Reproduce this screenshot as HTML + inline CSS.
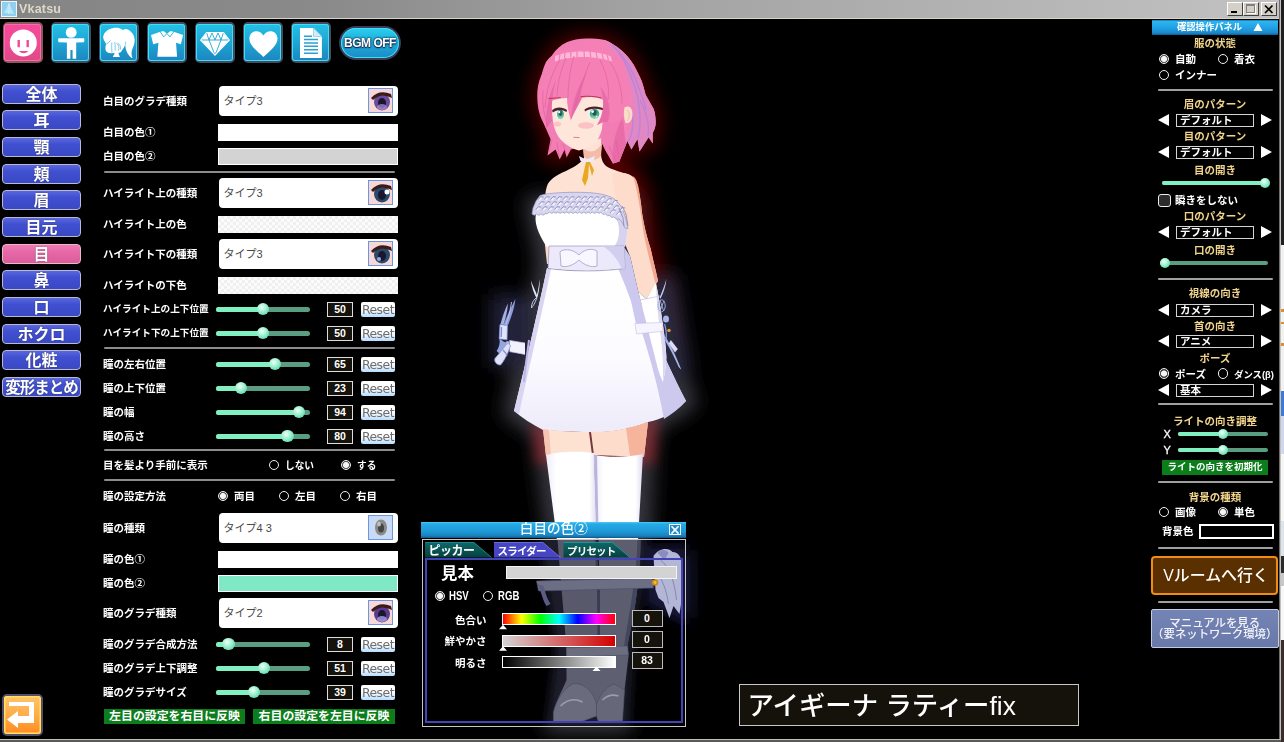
<!DOCTYPE html>
<html lang="ja">
<head>
<meta charset="utf-8">
<title>Vkatsu</title>
<style>
*{box-sizing:border-box;margin:0;padding:0}
html,body{width:1284px;height:742px;overflow:hidden;background:#000}
body{position:relative;font-family:"Liberation Sans","Noto Sans CJK JP",sans-serif;color:#fff;font-size:11px}
.abs{position:absolute}
#titlebar{position:absolute;left:0;top:0;width:1281px;height:19px;background:linear-gradient(90deg,#858585 0%,#8a8a8a 25%,#a2a2a2 50%,#c2c2c2 100%);border-bottom:1px solid #d8d4c8}
#titlebar .ttl{position:absolute;left:19px;top:0;line-height:19px;font-size:12.5px;color:#ddd8c8;font-weight:bold;letter-spacing:.2px}
#client{position:absolute;left:0;top:19px;width:1280px;height:720px;background:#000;overflow:hidden}
/* top toolbar */
.tb{position:absolute;top:22.2px;width:40.4px;height:40.8px;border-radius:5px;background:#48485f;padding:1.5px}
.tb i{display:block;width:37.4px;height:37.8px;border-radius:3px;background:linear-gradient(180deg,#25c0e6 0%,#1fa8d6 45%,#1b86c0 100%);box-shadow:inset 0 0 0 1px #39e0f6}
.tb.sel{background:#8a5a5a}
.tb.sel i{background:linear-gradient(180deg,#f24a9a 0%,#ee4c96 50%,#e04884 100%);box-shadow:inset 0 0 0 1px #ff66b4}
.tb svg{position:absolute;left:.4px;top:.8px}
/* left nav */
.nv{position:absolute;left:2px;width:79px;height:20px;border-radius:4px;border:1px solid #b8b8d8;background:linear-gradient(180deg,#5a68de 0%,#4050d0 35%,#3a48c4 100%);color:#fff;font-weight:bold;font-size:16px;line-height:19.5px;text-align:center;text-shadow:0 0 1px #223}
.nv.sel{background:linear-gradient(180deg,#f07ab4 0%,#e668a6 40%,#dc5c9a 100%);border-color:#e8b8d0}
/* form */
.lb{position:absolute;left:103px;height:14px;line-height:14px;font-size:10.5px;font-weight:bold;color:#fff;white-space:nowrap}
.dd{position:absolute;left:219px;width:179px;height:29.6px;border-radius:4px;background:#fff;color:#484848;font-size:11px;line-height:30.5px;padding-left:4.5px}
.dd .th{position:absolute;right:5px;top:2px;width:25px;height:25px;border:1px solid #6a96e4;background:#f4dada;overflow:hidden}
.cb{position:absolute;left:218px;width:180px;height:17px;background:#fff}
.sep{position:absolute;left:104px;width:291px;height:2px;background:#8c8c8c;border-radius:1px}
.sl{position:absolute;left:216px;width:94px;height:5px;border-radius:3px;background:#5a9e82}
.sl b{position:absolute;left:0;top:0;height:5px;border-radius:3px;background:#80f0c0}
.sl u{position:absolute;top:-3.7px;margin-left:.3px;width:12.4px;height:12.4px;border-radius:50%;background:radial-gradient(circle at 40% 35%,#f0fff8 0%,#b4f6dc 30%,#6ee0b4 70%,#4cc09a 100%)}
.nb{position:absolute;left:327px;width:26px;height:15px;border:1px solid #ddd;background:#15130b;color:#fff;font-weight:bold;font-size:10.5px;line-height:13px;text-align:center}
.rs{position:absolute;left:361px;width:34px;height:15px;border-radius:2px;background:linear-gradient(180deg,#fff 0%,#fff 45%,#b8dcff 100%);color:#6c6c6c;font-size:12.4px;line-height:16.5px;text-align:center;font-family:"DejaVu Sans","Liberation Sans",sans-serif;letter-spacing:-.5px;overflow:hidden}
.rd{position:absolute;width:10.6px;height:10.6px;border-radius:50%;border:1.8px solid #f0f0f0;background:#000;margin:.2px}
.rd.on{background:radial-gradient(circle,#fafafa 0,#f0f0f0 2.7px,#555 3.3px,#333 4px)}
.rt{position:absolute;height:14px;line-height:14px;font-size:10.5px;font-weight:bold;color:#fff;white-space:nowrap}
.gb{position:absolute;height:15px;background:#0b7d1b;color:#fff;font-weight:bold;font-size:11.9px;line-height:15px;text-align:center;white-space:nowrap}
/* right panel */
.rh{position:absolute;left:1152px;top:19.5px;width:126px;height:15px;background:linear-gradient(180deg,#1470a8 0,#2cb4f0 1.5px,#22a2e4 50%,#1a88cc 13px,#0e5a90 15px);color:#fff;font-weight:bold;font-size:9.3px;line-height:15px}
.tl{position:absolute;left:1152px;width:126px;height:14px;line-height:14px;text-align:center;color:#f0d48c;font-weight:bold;font-size:10.5px;white-space:nowrap}
.rsep{position:absolute;left:1158px;width:115px;height:2px;background:#a0a0a0;border-radius:1px}
.selr{position:absolute;left:1158px;width:114px;height:13px}
.selr .bx{position:absolute;left:18px;top:0;width:78px;height:13px;border:1.3px solid #d4d4d4;background:#000;color:#fff;font-weight:bold;font-size:10.5px;line-height:10px;padding-left:3px;white-space:nowrap;overflow:hidden}
.selr .la{position:absolute;left:0;top:0;width:0;height:0;border-top:6.5px solid transparent;border-bottom:6.5px solid transparent;border-right:11px solid #fff}
.selr .ra{position:absolute;right:0;top:0;width:0;height:0;border-top:6.5px solid transparent;border-bottom:6.5px solid transparent;border-left:11px solid #fff}
.sl2{position:absolute;height:4px;border-radius:2px;background:#5a9e82}
.sl2 b{position:absolute;left:0;top:0;height:4px;border-radius:2px;background:#80f0c0}
.sl2 u{position:absolute;top:-3px;width:10px;height:10px;border-radius:50%;background:radial-gradient(circle at 40% 35%,#f0fff8 0%,#b4f6dc 30%,#6ee0b4 70%,#4cc09a 100%)}
</style>
</head>
<body>
<div id="titlebar"><svg class="abs" style="left:1px;top:1px" width="16" height="16" viewBox="0 0 16 16"><rect x="0" y="0" width="16" height="16" fill="#8fd0ee"/><rect x=".5" y=".5" width="15" height="15" fill="none" stroke="#e8f6ff"/><path d="M8 2 L3 12 L13 13 Z" fill="#b8e4f8"/><path d="M8 2 L8 13" stroke="#d8f0fc" stroke-width=".8"/></svg><span class="ttl">Vkatsu</span><div class="abs" style="left:1227px;top:2px;width:16px;height:14px;background:#d4d0c8;border:1px solid #fff;border-right-color:#404040;border-bottom-color:#404040"><div class="abs" style="left:3px;top:8px;width:6px;height:2px;background:#000"></div></div><div class="abs" style="left:1243px;top:2px;width:16px;height:14px;background:#d4d0c8;border:1px solid #fff;border-right-color:#404040;border-bottom-color:#404040"><div class="abs" style="left:2px;top:1px;width:9px;height:9px;border:1px solid #808080;border-top-width:2px;box-shadow:1px 1px 0 #fff"></div></div><div class="abs" style="left:1261px;top:2px;width:16px;height:14px;background:#d4d0c8;border:1px solid #fff;border-right-color:#404040;border-bottom-color:#404040"><svg class="abs" style="left:2px;top:1px" width="10" height="10" viewBox="0 0 10 10"><path d="M1 1.5 L8.5 9 M8.5 1.5 L1 9" stroke="#000" stroke-width="1.7"/></svg></div></div>
<svg class="abs" style="left:0;top:19px" width="1280" height="720" viewBox="0 19 1280 720">
<defs>
<filter id="b14" x="-50%" y="-50%" width="200%" height="200%"><feGaussianBlur stdDeviation="9"/></filter>
<filter id="b8" x="-50%" y="-50%" width="200%" height="200%"><feGaussianBlur stdDeviation="6"/></filter>
<linearGradient id="gskirt" x1="0" y1="0" x2="0" y2="1"><stop offset="0" stop-color="#ffffff"/><stop offset=".55" stop-color="#fcfbff"/><stop offset="1" stop-color="#eeebfa"/></linearGradient>
<linearGradient id="gstock" x1="0" y1="0" x2="1" y2="0"><stop offset="0" stop-color="#eeeaf8"/><stop offset=".2" stop-color="#ffffff"/><stop offset=".85" stop-color="#ffffff"/><stop offset="1" stop-color="#dcd8f0"/></linearGradient>
<linearGradient id="ghair" x1="0" y1="0" x2="1" y2="0"><stop offset="0" stop-color="#f27cb4"/><stop offset=".7" stop-color="#f482b8"/><stop offset="1" stop-color="#e882c0"/></linearGradient>
<path id="hairo" d="M587,38.5 C579,38.5 572,40 566.7,42.2 C561,45 556,49 552.6,54.4 C548,60 545,66 542.5,72.6 C540,78 538,84 537.4,90.8 C537,97 537.4,103 538.4,109 C539.5,114 541,119 543.5,123 L550.6,139.3 L547.5,155.5 L555.6,149.4 L559.7,159.5 L564.7,149.4 L566.7,157.5 L570.8,149.4 L601,141 L605,149.4 L613,163.6 L619.3,161.6 L627.4,141 L631.4,149.4 L637.5,139 L639.5,151.4 L648.6,137.3 L652.7,143.4 L652.7,133 C655,129 656,125 655.7,121 C655.5,117 655,113 653.7,109 L645.6,94.8 C644.5,90 643,85 641.6,80.7 C639,75 636.5,70 633.5,64.5 C630,59 626,54 621,50 C616,46 611,42.5 605,40 C599,38.5 593,38.5 587,38.5 Z"/>
<path id="bodyo" d="M566,171 C556,175 549,180 547,186 L545,204 L534,213 C533,222 538,234 547,247 L547,268 C536,320 524,370 514,411 C522,418 532,424 543,430 L546,455 L560,560 L566,640 L553,706 L554,722 L622,722 L630,650 L640,560 L644,457 L648,422 C660,420 676,412 686,401 C670,370 655,340 645,310 L659,284 L650,246 L642,194 C640,182 634,176 626,174 Z"/>
<linearGradient id="giris" x1="0" y1="0" x2="0" y2="1"><stop offset="0" stop-color="#2c8068"/><stop offset=".55" stop-color="#4cae8e"/><stop offset="1" stop-color="#9adcc0"/></linearGradient>
</defs>
<!-- glows -->
<g filter="url(#b14)">
<use href="#hairo" fill="#440000" stroke="#440000" stroke-width="14" stroke-linejoin="round"/>
<path d="M606,166 L630,175 C640,180 642,190 643,200 L650,246 L662,290 L668,340 L640,340 L600,200 Z" fill="#5a0000" stroke="#5a0000" stroke-width="14" stroke-linejoin="round"/>
</g>
<g filter="url(#b14)">
<path d="M536,205 L628,205 L628,268 L686,401 L648,424 L644,457 L640,560 L630,650 L622,722 L554,722 L566,640 L560,560 L546,455 L543,430 L514,411 L547,268 L545,247 Z" fill="#34343e" stroke="#34343e" stroke-width="22" stroke-linejoin="round"/>
<path d="M497,300 L526,302 L528,358 L497,362 Z" fill="#22223a" stroke="#22223a" stroke-width="12"/>
<path d="M642,288 L670,280 L684,368 L662,385 Z" fill="#2a2a40" stroke="#2a2a40" stroke-width="12"/>
<path d="M660,556 L684,556 L684,612 L660,612 Z" fill="#1c1c44" stroke="#1c1c44" stroke-width="12"/>
</g>
<g filter="url(#b8)" style="mix-blend-mode:screen"><path d="M538,428 L652,422 L650,458 L541,458 Z" fill="#520000" stroke="#520000" stroke-width="12"/></g>
<!-- back hair -->
<use href="#hairo" fill="url(#ghair)"/>
<path d="M605,40 C611,42.5 616,46 621,50 C626,54 630,59 633.5,64.5 C636.5,70 639,75 641.6,80.7 C643,85 644.5,90 645.6,94.8 L653.7,109 C655,113 655.5,117 655.7,121 C656,125 655,129 652.7,133 L652.7,143.4 L648.6,137.3 L639.5,151.4 L637.5,139 L631.4,149.4 L627.4,141 L624,150 C628,136 634,124 634,110 C634,92 628,74 618,58 C614,52 610,46 605,40 Z" fill="#e088c4"/>
<path d="M612,45 C622,54 630,66 636,80 C640,92 644,100 646,110 M618,52 C628,66 634,82 638,98 C640,110 642,124 638,138 M640,100 C646,112 650,124 648,136 M632,112 C634,124 632,136 628,142" stroke="#b884dc" stroke-width="1.3" fill="none"/>
<!-- neck & shoulders -->
<path d="M583,144 L584,158 C580,164 572,168 566,171 C556,175 549,180 547,186 C545,192 545,198 545,204 L545,216 L630,216 L638,195 C638,186 635,179 630,175 C622,172 612,170 606,166 C602,162 601,158 601,152 L602,138 Z" fill="#fee2d4"/>
<path d="M583,148 C590,154 597,152 602,143 L601,156 C596,161 589,161 584,157 Z" fill="#f4bca8"/>
<!-- right arm -->
<path d="M612,174 C622,171 632,174 636,180 C639,190 641,202 642,213 C644,226 647,238 650.7,249 C653,260 656,271 658,281 L646.3,299 L638.4,292 C636,282 633,268 630,256 C625,244 620,232 617,206 Z" fill="#fddccc"/>
<path d="M633,176 C636,178 638,184 639,190 C641,202 642,213 642,213 C644,226 647,238 650.7,249 C653,260 656,271 658,281 L655.5,283.5 C652,270 648,254 645,240 C642,226 640,200 633,176 Z" fill="#f4a890"/>
<!-- left arm sliver -->
<path d="M545,200 L544,236 L547,264 L552,264 L550,216 Z" fill="#fbd8c8"/>
<!-- face -->
<path d="M550,94 L553,121 C554,128 556,133 558.6,137 C563,143 570,148 578.9,150.4 C586,149 592,146 597,141 C600,136 602,130 603,125 L612,94 Z" fill="#fee6da"/>
<ellipse cx="586" cy="125.5" rx="8" ry="3.2" fill="#f8a4b0" opacity=".55"/>
<ellipse cx="557.5" cy="124" rx="3.6" ry="2.6" fill="#f8a4b0" opacity=".5"/>
<!-- eyes -->
<ellipse cx="560" cy="114" rx="4.4" ry="5.4" fill="#eef6f2"/>
<ellipse cx="560.5" cy="114.5" rx="3.4" ry="4.8" fill="url(#giris)"/>
<ellipse cx="560.5" cy="113.5" rx="1.6" ry="2.6" fill="#1e5e4e"/>
<path d="M552,110.5 C555,106.5 563,106.5 567,110 L566.5,112 C562,109 557,109.3 552.8,112.5 Z" fill="#4a2030"/>
<ellipse cx="594.5" cy="113.5" rx="6.4" ry="5.6" fill="#eef6f2"/>
<ellipse cx="594.5" cy="114" rx="4.8" ry="5.1" fill="url(#giris)"/>
<ellipse cx="594.5" cy="113" rx="2.1" ry="2.8" fill="#1e5e4e"/>
<path d="M584.5,109.5 C589,105.5 599,105.5 605,109 L605.5,111.5 C599,107.8 590,108 585,111.5 Z" fill="#4a2030"/>
<path d="M573.5,137.3 L579.5,137.6" stroke="#d88484" stroke-width="1"/>
<circle cx="559.2" cy="112.2" r="1.1" fill="#fff"/><circle cx="592.6" cy="111.6" r="1.4" fill="#fff"/><circle cx="596.6" cy="116.6" r=".8" fill="#e8fff4"/>
<!-- side lock over right cheek + bangs -->
<path d="M601,141 L605,149.4 L613,163.6 L619.3,161.6 L626,144 C624,134 624,126 623,118 C622,104 616,90 606,80 Z" fill="#f27cb4"/>
<path d="M546,62 C558,44 604,38 622,58 C628,70 630,88 628,100 C626,106 624,112 622,118 C616,123 608,123 603,122 L597,125 C603,117 605,108 603,100 C599,97 590,96 582,98 C578,105 574,113 570.8,120 C568.5,112 567,105 567,98 C562,98 556,99 551,101 C550.5,108 551,115 552,121 L546,128 C541,118 538.5,104 539.5,90 C540.5,78 543,68 546,62 Z" fill="#f580b6"/>
<path d="M570.8,120 C572,106 575,90 587,72 C581,88 579,100 582,98 C578,105 574,113 570.8,120 Z M597,125 C604,114 605,100 600,86 C608,96 612,110 608,122 L603,122 Z M546,128 C545,114 548,96 556,80 C552,96 551,110 552,121 Z M613,163.6 C612,150 614,136 620,122 L623,118 C624,126 624,134 626,144 L619.3,161.6 Z" fill="#e86ca8"/>
<path d="M555,56 C570,50 596,50 611,56.5 L612,61.5 C596,55.5 570,55.5 555,61.5 Z" fill="#ffb8da"/>
<path d="M560,54 L559,60 M565,52.5 L564.5,58.5 M571,51.6 L570.6,57.4 M577,51 L577,57 M584,51 L584.4,57 M590,51.2 L590.8,57.2 M596,52 L597,58 M602,53.4 L603.4,59.2 M607,55 L608.6,60.6" stroke="#f580b6" stroke-width="1.3" fill="none"/>
<path d="M548.5,98.5 L560.7,97.6 M580.5,96.6 C588,95.8 596,96.4 601.5,98" stroke="#c03058" stroke-width="1" fill="none"/>
<path d="M624.5,107.5 C629,104.5 632.5,108 632.5,114 C632.5,120 629.5,124 625.5,123 C623.5,118 623.5,112 624.5,107.5 Z" fill="#fddccc"/>
<path d="M627,110 C630,112 630,118 627,121" stroke="#eeb0a0" stroke-width=".8" fill="none"/>
<path d="M560,60 C552,72 546,90 545,108 M566,58 C560,72 557,86 557,98 M574,56 C570,70 568,84 568,98 M590,62 C584,76 580,90 574,110 M600,60 C606,72 610,86 608,100 M610,62 C618,74 622,88 622,104 M543,90 C542,104 544,116 548,126" stroke="#e4609e" stroke-width=".9" fill="none" opacity=".8"/>
<path d="M552,140 L549,152 M557,142 L559,156 M563,144 L566,154 M609,146 L615,160 M616,140 L619,158" stroke="#e4609e" stroke-width=".9" fill="none" opacity=".8"/>
<!-- choker -->
<path d="M579,156 L586,159.5 L595,156 L593.5,161 L587,163 L580.5,161 Z" fill="#eeeaf8"/>
<path d="M586,162 L582,180 L585,186 L588,178 L589,164 L592,176 L594,170 L590,162 Z" fill="#e8a820"/>
<!-- dress bodice -->
<path d="M536,214 C534,222 538,234 547,247 L625,247 C627,238 628,230 626,222 L617,211 C600,207 560,207 540,213 Z" fill="#ffffff"/>
<path d="M612,214 C620,220 622,236 614,247 L625,247 C627,238 628,230 626,222 L617,211 Z" fill="#d6d2f0"/>
<!-- frill -->
<path d="M540,195.5 C546,193.5 560,192.3 575,192.3 C590,192.3 606,193 615,199.5 L621,206 L625,216 L628,228.5 L625,228 L622,222 L619,219 Q616.9,220.3 613.7,216.9 Q612.5,218.8 609.4,215.4 Q608.2,217.2 605.1,213.8 Q604.0,215.7 600.8,212.3 Q599.6,214.6 596.5,212.0 Q595.4,214.6 592.2,212.0 Q591.0,214.6 587.9,212.0 Q586.8,214.6 583.6,212.0 Q582.5,214.6 579.3,212.0 Q578.1,214.6 575.0,212.0 Q573.9,214.6 570.7,212.0 Q569.5,214.6 566.4,212.0 Q565.2,214.6 562.1,212.0 Q561.0,214.6 557.8,212.0 Q556.6,214.6 553.5,212.0 Q552.4,214.6 549.2,212.0 Q548.0,214.6 544.9,213.7 Q543.8,216.4 540.6,213.8 Q539.5,216.5 536.3,213.9 Q535.1,216.6 532.0,214.0 L533,208 L536,201 Z" fill="#d8d6ee" stroke="#9694c2" stroke-width=".7"/>
<path d="M539.2,200.1 l2.4,-2.4 M545.4,200.1 l2.4,-2.4 M551.6,200.1 l2.4,-2.4 M557.8,200.1 l2.4,-2.4 M564.0,200.1 l2.4,-2.4 M570.2,200.1 l2.4,-2.4 M576.4,200.1 l2.4,-2.4 M582.6,200.1 l2.4,-2.4 M588.8,200.1 l2.4,-2.4 M595.0,200.1 l2.4,-2.4 M601.2,200.1 l2.4,-2.4 M607.4,202.0 l2.4,-2.4 M613.6,203.8 l2.4,-2.4 M540.2,205.1 l2.4,-2.4 M546.4,205.1 l2.4,-2.4 M552.6,205.1 l2.4,-2.4 M558.8,205.1 l2.4,-2.4 M565.0,205.1 l2.4,-2.4 M571.2,205.1 l2.4,-2.4 M577.4,205.1 l2.4,-2.4 M583.6,205.1 l2.4,-2.4 M589.8,205.1 l2.4,-2.4 M596.0,205.1 l2.4,-2.4 M602.2,205.4 l2.4,-2.4 M608.4,207.3 l2.4,-2.4 M614.6,209.1 l2.4,-2.4 M620.8,211.0 l2.4,-2.4 M537.0,210.1 l2.4,-2.4 M543.2,210.1 l2.4,-2.4 M549.4,210.1 l2.4,-2.4 M555.6,210.1 l2.4,-2.4 M561.8,210.1 l2.4,-2.4 M568.0,210.1 l2.4,-2.4 M574.2,210.1 l2.4,-2.4 M580.4,210.1 l2.4,-2.4 M586.6,210.1 l2.4,-2.4 M592.8,210.1 l2.4,-2.4 M599.0,210.1 l2.4,-2.4 M605.2,211.3 l2.4,-2.4 M611.4,213.2 l2.4,-2.4 M617.6,215.0 l2.4,-2.4 " stroke="#f4f4fc" stroke-width="1.6" fill="none"/>
<path d="M538.0,199.7 l2.6,-3 l3,0.4 M544.2,199.7 l2.6,-3 l3,0.4 M550.4,199.7 l2.6,-3 l3,0.4 M556.6,199.7 l2.6,-3 l3,0.4 M562.8,199.7 l2.6,-3 l3,0.4 M569.0,199.7 l2.6,-3 l3,0.4 M575.2,199.7 l2.6,-3 l3,0.4 M581.4,199.7 l2.6,-3 l3,0.4 M587.6,199.7 l2.6,-3 l3,0.4 M593.8,199.7 l2.6,-3 l3,0.4 M600.0,199.7 l2.6,-3 l3,0.4 M606.2,201.6 l2.6,-3 l3,0.4 M612.4,203.4 l2.6,-3 l3,0.4 M539.0,204.7 l2.6,-3 l3,0.4 M545.2,204.7 l2.6,-3 l3,0.4 M551.4,204.7 l2.6,-3 l3,0.4 M557.6,204.7 l2.6,-3 l3,0.4 M563.8,204.7 l2.6,-3 l3,0.4 M570.0,204.7 l2.6,-3 l3,0.4 M576.2,204.7 l2.6,-3 l3,0.4 M582.4,204.7 l2.6,-3 l3,0.4 M588.6,204.7 l2.6,-3 l3,0.4 M594.8,204.7 l2.6,-3 l3,0.4 M601.0,205.0 l2.6,-3 l3,0.4 M607.2,206.9 l2.6,-3 l3,0.4 M613.4,208.7 l2.6,-3 l3,0.4 M619.6,210.6 l2.6,-3 l3,0.4 M535.8,209.7 l2.6,-3 l3,0.4 M542.0,209.7 l2.6,-3 l3,0.4 M548.2,209.7 l2.6,-3 l3,0.4 M554.4,209.7 l2.6,-3 l3,0.4 M560.6,209.7 l2.6,-3 l3,0.4 M566.8,209.7 l2.6,-3 l3,0.4 M573.0,209.7 l2.6,-3 l3,0.4 M579.2,209.7 l2.6,-3 l3,0.4 M585.4,209.7 l2.6,-3 l3,0.4 M591.6,209.7 l2.6,-3 l3,0.4 M597.8,209.7 l2.6,-3 l3,0.4 M604.0,210.9 l2.6,-3 l3,0.4 M610.2,212.8 l2.6,-3 l3,0.4 M616.4,214.6 l2.6,-3 l3,0.4 " stroke="#8482b4" stroke-width=".8" fill="none"/>
<path d="M622,206 L626,214 L628,226 M619,208 L623,218 L624,226" stroke="#8482b4" stroke-width=".8" fill="none"/>
<!-- skirt -->
<path d="M547,268 C560,271 600,272 625,268 C640,300 660,350 686,401 C676,412 660,420 648,422 C628,430 608,433 589,432 C572,432 556,431 543,430 C532,424 522,418 514,411 C524,370 536,320 547,268 Z" fill="url(#gskirt)"/>
<path d="M618,268 L625,268 C640,300 660,350 686,401 C680,408 672,414 664,419 C655,370 640,320 618,268 Z" fill="#cdc8ee"/>
<path d="M547,268 C536,320 524,370 514,411 L519,414 C528,372 540,322 551,269 Z" fill="#d8d4f2"/>
<path d="M624,247 L630,256 C633,268 636,282 638.4,292 L647,324 L636,324 L624,268 Z" fill="#cdc8ee"/>
<path d="M529,340 C527,355 525,370 524,382" stroke="#b8b4e8" stroke-width="2" fill="none"/>
<!-- belt -->
<path d="M549,246 L624,246 L625,268.5 C600,272 570,271.5 548,268.5 Z" fill="#ece9fa" stroke="#8886b0" stroke-width=".6"/>
<path d="M579,255 C572,248 562,249 560,252 L561,266 C566,268 574,265 579,260 C584,265 592,268 597,266 L597,251 C592,248 584,249 579,255 Z" fill="#f8f6ff" stroke="#8886b0" stroke-width=".6"/>
<path d="M604,247 C612,252 618,260 622,269 L625,268.5 L624,246 Z" fill="#d2cef0"/>
<!-- right glove -->
<path d="M638.4,292 L646.3,299 L655.9,283 C658.5,295 660.5,307 662,319 C664,332 666,345 666.4,357.6 C666,366 665,374 662.9,382 C660.5,377 659,372 657.7,368 C654,353 650,338 646.3,322.5 C643.5,312 641,302 638.4,292 Z" fill="#ffffff"/>
<path d="M655.9,283 C658.5,295 660.5,307 662,319 C664,332 666,345 666.4,357.6 C666,366 665,374 662.9,382 C663.4,366 662.6,350 660.4,334 C658.4,318 656.4,300 655.9,283 Z" fill="#dcd8f4"/>
<path d="M634.9,323.4 L662.9,322.5 L662.9,331.3 L636.6,334 Z" fill="#f6f4ff" stroke="#b8b4dc" stroke-width=".5"/>
<path d="M640,300 L660,296" stroke="#c8ccf0" stroke-width=".8"/>
<!-- right ribbons -->
<path d="M666.4,278.8 C664.5,286 662,292 659.4,298 L660.6,298.6 C663.5,292.6 666,286 666.4,278.8 Z" fill="#c4ccf4"/>
<ellipse cx="661.6" cy="305.8" rx="3.6" ry="6" fill="none" stroke="#9aa8e0" stroke-width="1"/>
<path d="M660,300 L663.6,311 M664,300.5 L660,311" stroke="#b8c4f0" stroke-width=".8"/>
<ellipse cx="666" cy="319" rx="3" ry="3.6" fill="#a8b6ea"/>
<circle cx="669" cy="330.4" r="1.7" fill="#e8a030"/>
<path d="M665.5,336.5 C671,346 677,358 681.3,369.8 L678.6,367 C675,357.6 669,347 663.8,338.4 Z" fill="#a8b8ec"/>
<path d="M670.8,340 L677.8,349 L675,352.4 L668.8,343.6 Z" fill="#dcdcf6"/>
<path d="M664.6,324 C666.4,330 667,336 665.5,341" stroke="#8aa0e0" stroke-width="1.2" fill="none"/>
<!-- left dress ribbon -->
<path d="M530.9,280.4 C533,286 536,292 537.6,296.7 L536.4,298 C534,293 531.6,287 530.9,280.4 Z M539.8,278.9 C540,285 539,291 537.6,296.7 L536.6,296 C538,291 539,285 539.8,278.9 Z" fill="#e4e6fa"/>
<path d="M537,297.5 C534,299 531.5,303 531.4,308 C533,306.5 535,303 537,297.5 Z" fill="none" stroke="#c4ccf4" stroke-width="1"/>
<!-- left hand ribbons -->
<path d="M515.4,298.9 C514.5,308 511,318 507.5,326 L503.5,324.5 C507,316 511.5,306 515.4,298.9 Z" fill="#8e9cdc"/>
<path d="M508,303.3 C507.5,311 505.5,319 503.5,325 L500.5,324 C502.5,317 505,309 508,303.3 Z" fill="#a4b0e6"/>
<path d="M511.5,302 C510.5,310 508.5,318 505.5,325.5" stroke="#c0c8f0" stroke-width=".9" fill="none"/>
<path d="M500,324.5 L507.4,325.6 L507,339.8 L499.2,338.8 Z" fill="#dfe4fa" stroke="#8c9ad8" stroke-width=".8"/>
<path d="M501.5,327 L501.2,337" stroke="#7e8ed2" stroke-width="1.4"/>
<path d="M509.4,340.4 L525,343 L525,354.4 L509.6,351.6 Z" fill="#f2f2fe"/>
<path d="M509.4,340.4 L525,343 M509.6,351.6 L525,354.4" stroke="#c8c8ec" stroke-width=".7"/>
<path d="M499.4,338.6 C502,341 505,342.4 507.6,343 C505.4,347 502.4,351 499.4,353.6 L496.6,351 C499,347.6 500.4,343.6 499.4,338.6 Z" fill="#96a4e0"/>
<path d="M507.6,342.6 C504,348 498.4,354.6 495,358.4 C493.8,361.4 496.6,365.2 500.6,365 C504.4,360.6 508.4,352.6 510.6,345.4 Z" fill="#e0e2fa" stroke="#8c9ad8" stroke-width=".8"/>
<path d="M503,350 C505,352 506.5,354 507,356" stroke="#7e8ed2" stroke-width="1.2" fill="none"/>
<circle cx="507.6" cy="342.8" r="1.8" fill="#a8b4ea"/>
<!-- thighs -->
<path d="M543,429 C556,431 572,432 589,432 L592,455 L546,456 Z" fill="#fde2d2"/>
<path d="M591,432 C610,432 630,429 648,422 L644,457 L594,455 Z" fill="#fddccc"/>
<path d="M626,428 C634,427 642,424 648,422 L644,457 L630,456 Z" fill="#f6b49c"/>
<path d="M543,429 L549,430 L551,456 L546,456 Z" fill="#f6c4b0"/>
<!-- stockings & boots -->
<path d="M546,455 C560,451 580,451 594,453 L597,540 L596,650 L566,650 L557,540 Z" fill="url(#gstock)"/>
<path d="M594,455 C610,458 630,457 643,454 L638,540 L630,650 L598,650 L597,540 Z" fill="url(#gstock)"/>
<path d="M594,455 L597,560 L598,650 L600,650 L599,560 L597,455 Z" fill="#b8b4dc"/>
<path d="M566,640 L628,640 L630,660 L624,700 L622,722 L578,722 L576,712 L554,722 L553,706 C556,690 564,676 566,660 Z" fill="#d0d0dc"/>
<path d="M566,646 L630,646 L630,652 L566,652 Z" fill="#e8e8f0"/>
<path d="M654,556 C664,550 676,556 679,566 L678,612 L668,600 L660,596 L654,590 Z" fill="#e4e2f2"/>
<circle cx="654.5" cy="582.5" r="3" fill="#e89020"/>
<path d="M538,584 L554,580 L556,600 L542,604 Z" fill="#a8a8d8"/>
</svg>
<div class="abs" style="left:1279px;top:0;width:1px;height:740px;background:#6e6d6a"></div><div class="abs" style="left:1280px;top:0;width:1px;height:740px;background:#c4c2bc"></div><div class="abs" style="left:1281px;top:0;width:3px;height:19px;background:#1e1e1e"></div><div class="abs" style="left:1281.2px;top:19px;width:3px;height:226px;background:#202020"></div><div class="abs" style="left:1281.2px;top:245px;width:3px;height:146px;background:#f2f2f2"></div><div class="abs" style="left:1281.2px;top:391px;width:3px;height:25px;background:#3c7ad8"></div><div class="abs" style="left:1281.2px;top:416px;width:3px;height:38px;background:#d2d6f0"></div><div class="abs" style="left:1281.2px;top:454px;width:3px;height:67px;background:#f6f6f6"></div><div class="abs" style="left:1281.2px;top:521px;width:3px;height:35px;background:#dfe3ee"></div><div class="abs" style="left:1281.2px;top:556px;width:3px;height:17px;background:#2a2a2a"></div><div class="abs" style="left:1281.2px;top:573px;width:3px;height:13px;background:#c8c8c8"></div><div class="abs" style="left:1281.2px;top:586px;width:3px;height:54px;background:#f8f8f8"></div><div class="abs" style="left:1281.2px;top:640px;width:3px;height:102px;background:#3a2c2c"></div><div class="abs" style="left:1281.2px;top:309px;width:3px;height:2.5px;background:#d89030"></div><div class="abs" style="left:1281.2px;top:321.5px;width:3px;height:2.5px;background:#d89030"></div><div class="abs" style="left:1281.2px;top:343px;width:3px;height:2.5px;background:#d89030"></div><div class="abs" style="left:0;top:738.5px;width:1281px;height:1.8px;background:#c4beb4"></div><div class="abs" style="left:0;top:740.3px;width:1281px;height:2px;background:#5a5a5a"></div><div class="tb sel" style="left:2.6px"><i></i><svg width="40" height="40" viewBox="0 0 40 40"><circle cx="20.3" cy="19.9" r="13.5" fill="#fff"/><rect x="14.5" y="17" width="2.4" height="7.2" fill="#ee4c96"/><rect x="23.5" y="17" width="2.4" height="7.2" fill="#ee4c96"/><path d="M15.8 28 H25.5 Q20.6 32.5 15.8 28 Z" fill="#ee4c96"/></svg></div>
<div class="tb" style="left:50.6px"><i></i><svg width="40" height="40" viewBox="0 0 40 40"><circle cx="20.2" cy="9.4" r="5.4" fill="#fff"/><path d="M7.5 15.2 H33 Q34 17.2 33 19.2 L25.2 19.6 V35.8 H21.6 V27 H19.4 V35.8 H15.9 V19.6 L7.5 19.2 Q6.5 17.2 7.5 15.2 Z" fill="#fff"/></svg></div>
<div class="tb" style="left:98.6px"><i></i><svg width="40" height="40" viewBox="0 0 40 40"><g transform="translate(0,-.5)"><path d="M4.1 14.7 C4.5 12 5.3 10.5 6.7 9.5 C8.5 7.5 11 6.3 13.5 5.8 C15.5 5.3 17.5 5.2 19.4 5.4 C21.2 5.8 22.6 6.6 23.9 7.6 C24.8 6.9 25.8 6.5 26.9 6.5 C28.6 6.7 30.2 7.5 31.4 8.7 C33.2 10.2 34.4 12 35.1 14 C35.7 16 35.8 18 35.5 20 C35.2 22.2 34.4 24 33.6 25.9 C33 27.5 32.5 29 32.5 30.4 C32.5 32.2 32.9 34 33.6 35.7 C32 35 30.9 34 29.9 32.7 C28.9 31.5 28.2 30.2 27.7 28.9 C27 27.4 26.7 26 26.5 24.4 C26.4 23.6 26.3 22.9 26.2 22.2 C25.5 24.2 24.5 26 23.2 27.4 L21.7 29.7 L19.4 30.4 L20.9 34.5 H13.8 L15.7 30.4 L12 30.8 C10.6 30.8 9.3 30.4 8.2 29.7 C7.2 28.9 6.6 27.9 6.4 26.7 C6.3 24.9 6.6 23.2 7.1 21.5 L6 19.6 C5 18 4.3 16.4 4.1 14.7 Z" fill="#fff"/><path d="M12.8 20 C12.6 24 12.7 27 13 30 M15.8 19.5 C16.3 22 16.4 25 16 28 M17.8 21 C19.5 22.5 20.3 25 19.6 28 M18.5 20.5 C20.8 21.8 22 24 21.4 27 M26.9 19.2 C26.4 20.2 26.2 21.2 26.2 22.2 M7.1 21.5 C9 20.8 10.5 19.6 11.5 18" stroke="#40b4dc" stroke-width=".7" fill="none"/></g></svg></div>
<div class="tb" style="left:146.6px"><i></i><svg width="40" height="40" viewBox="0 0 40 40"><g transform="translate(0,-.5)"><path d="M11.1 9.9 L16.3 8.4 L20 11 L23.8 8.4 L29 9.9 L36.1 12.5 L33.9 21.8 L29 20.3 L30.1 34.2 H10.3 L11.4 20.3 L6.2 21.8 L4 12.5 Z" fill="#fff"/><path d="M13.3 9.4 L16.7 14.4 L20 11 L23 14.4 L26.6 9.4" stroke="#2aa8d8" stroke-width=".9" fill="none" stroke-linejoin="round"/></g></svg></div>
<div class="tb" style="left:194.6px"><i></i><svg width="40" height="40" viewBox="0 0 40 40"><path d="M11.5 9.5 H28.5 L34.3 17 L20 32.2 L5.7 17 Z" fill="#fff"/><path d="M11.5 9.5 H28.5 L34.3 17 L20 32.2 L5.7 17 Z M5.7 17 H34.3 M11.5 9.5 L14 17 L20 32.2 L26 17 L28.5 9.5 M14 17 L17 9.8 L20 17 L23 9.8 L26 17" stroke="#24a4d4" stroke-width=".9" fill="none" stroke-linejoin="round"/><path d="M11.5 9.5 H28.5 L34.3 17 L20 32.2 L5.7 17 Z" fill="none" stroke="#fff" stroke-width="1.2" stroke-linejoin="round"/></svg></div>
<div class="tb" style="left:242.6px"><i></i><svg width="40" height="40" viewBox="0 0 40 40"><path d="M20.4 33.9 C14 28 6.4 22.5 6.4 15.5 C6.4 7.5 16.5 5.5 20.4 12.5 C24.3 5.5 34.5 7.5 34.5 15.5 C34.5 22.5 27 28 20.4 33.9 Z" fill="#fff"/></svg></div>
<div class="tb" style="left:290.6px"><i></i><svg width="40" height="40" viewBox="0 0 40 40"><path d="M9 5.1 H22.5 L30.9 13.5 V35.1 H9 Z" fill="#fff"/><path d="M22.5 5.1 V13.5 H30.9 Z" fill="#d4ecf8" stroke="#6cc0e4" stroke-width=".6"/><path d="M13 13.3 H21 M13 16.5 H27 M13 20.1 H27 M13 23.3 H27 M13 26.8 H27 M13 30.2 H27" stroke="#2aa0d4" stroke-width="1.5"/>
</svg></div>
<div class="abs" style="left:339px;top:26px;width:62px;height:34px;border-radius:17px;background:#3c3c58;padding:2px"><div style="width:58px;height:30px;border-radius:15px;background:linear-gradient(180deg,#2ad0ee 0%,#20b0dc 40%,#1a8cc6 100%);box-shadow:inset 0 0 0 1px #3ce0f4;color:#fff;font-weight:bold;font-size:12px;line-height:30px;text-align:center;letter-spacing:-.5px;text-shadow:0 0 2px #124,0 0 2px #124,0 1px 1px #124;white-space:nowrap">BGM OFF</div></div>
<div class="nv" style="top:83.5px">全体</div>
<div class="nv" style="top:110.2px">耳</div>
<div class="nv" style="top:136.8px">顎</div>
<div class="nv" style="top:163.5px">頬</div>
<div class="nv" style="top:190.2px">眉</div>
<div class="nv" style="top:216.8px">目元</div>
<div class="nv sel" style="top:243.5px">目</div>
<div class="nv" style="top:270.2px">鼻</div>
<div class="nv" style="top:296.8px">口</div>
<div class="nv" style="top:323.5px">ホクロ</div>
<div class="nv" style="top:350.2px">化粧</div>
<div class="nv" style="top:376.8px;letter-spacing:-1px;font-size:15.5px">変形まとめ</div>
<div class="lb" style="top:94px">白目のグラデ種類</div><div class="dd" style="top:86.2px">タイプ3<div class="th"><svg width="24" height="23" viewBox="0 0 24 23"><rect width="24" height="23" fill="#f6d8d6"/><ellipse cx="13" cy="13" rx="8" ry="8.5" fill="#6a4a9a"/><ellipse cx="13" cy="14" rx="4" ry="5" fill="#1a1630"/><path d="M2 9 Q10 0 22 5 L23 9 Q12 3 4 11 Z" fill="#3a1a1a"/><ellipse cx="13" cy="18" rx="5" ry="3" fill="#b090d8" opacity=".7"/></svg></div></div>
<div class="lb" style="top:125px">白目の色①</div><div class="cb" style="top:123.5px;"></div>
<div class="lb" style="top:149px">白目の色②</div><div class="cb" style="top:147.5px;background:#d3d3d3;border:1px solid #fff"></div>
<div class="sep" style="top:171px"></div>
<div class="lb" style="top:186px">ハイライト上の種類</div><div class="dd" style="top:178.2px">タイプ3<div class="th"><svg width="24" height="23" viewBox="0 0 24 23"><rect width="24" height="23" fill="#f6d8d6"/><ellipse cx="13" cy="13" rx="8" ry="8.5" fill="#2a4a6a"/><ellipse cx="13" cy="14" rx="4" ry="5" fill="#1a1630"/><path d="M2 9 Q10 0 22 5 L23 9 Q12 3 4 11 Z" fill="#3a1a1a"/><circle cx="18" cy="11" r="2.5" fill="#fff"/></svg></div></div>
<div class="lb" style="top:217px">ハイライト上の色</div><div class="cb" style="top:215.5px;background-color:#fbfbfb;background-image:linear-gradient(45deg,#f0f0f0 25%,transparent 25%,transparent 75%,#f0f0f0 75%),linear-gradient(45deg,#f0f0f0 25%,transparent 25%,transparent 75%,#f0f0f0 75%);background-size:6px 6px;background-position:0 0,3px 3px"></div>
<div class="lb" style="top:247px">ハイライト下の種類</div><div class="dd" style="top:239.2px">タイプ3<div class="th"><svg width="24" height="23" viewBox="0 0 24 23"><rect width="24" height="23" fill="#f6d8d6"/><ellipse cx="13" cy="13" rx="8" ry="8.5" fill="#2a4a6a"/><ellipse cx="13" cy="14" rx="4" ry="5" fill="#1a1630"/><path d="M2 9 Q10 0 22 5 L23 9 Q12 3 4 11 Z" fill="#3a1a1a"/><circle cx="10" cy="17" r="2" fill="#9ad"/></svg></div></div>
<div class="lb" style="top:278px">ハイライトの下色</div><div class="cb" style="top:276.5px;background-color:#fbfbfb;background-image:linear-gradient(45deg,#f0f0f0 25%,transparent 25%,transparent 75%,#f0f0f0 75%),linear-gradient(45deg,#f0f0f0 25%,transparent 25%,transparent 75%,#f0f0f0 75%);background-size:6px 6px;background-position:0 0,3px 3px"></div>
<div class="lb" style="top:302px;font-size:9.65px">ハイライト上の上下位置</div><div class="sl" style="top:306.5px"><b style="width:47.0px"></b><u style="left:40.5px"></u></div><div class="nb" style="top:301.5px">50</div><div class="rs" style="top:301.5px">Reset</div>
<div class="lb" style="top:326px;font-size:9.65px">ハイライト下の上下位置</div><div class="sl" style="top:330.5px"><b style="width:47.0px"></b><u style="left:40.5px"></u></div><div class="nb" style="top:325.5px">50</div><div class="rs" style="top:325.5px">Reset</div>
<div class="sep" style="top:347px"></div>
<div class="lb" style="top:357px">瞳の左右位置</div><div class="sl" style="top:361.5px"><b style="width:59.3px"></b><u style="left:52.8px"></u></div><div class="nb" style="top:356.5px">65</div><div class="rs" style="top:356.5px">Reset</div>
<div class="lb" style="top:381px">瞳の上下位置</div><div class="sl" style="top:385.5px"><b style="width:24.9px"></b><u style="left:18.4px"></u></div><div class="nb" style="top:380.5px">23</div><div class="rs" style="top:380.5px">Reset</div>
<div class="lb" style="top:405px">瞳の幅</div><div class="sl" style="top:409.5px"><b style="width:83.1px"></b><u style="left:76.6px"></u></div><div class="nb" style="top:404.5px">94</div><div class="rs" style="top:404.5px">Reset</div>
<div class="lb" style="top:429px">瞳の高さ</div><div class="sl" style="top:433.5px"><b style="width:71.6px"></b><u style="left:65.1px"></u></div><div class="nb" style="top:428.5px">80</div><div class="rs" style="top:428.5px">Reset</div>
<div class="sep" style="top:449px"></div>
<div class="lb" style="top:458px">目を髪より手前に表示</div><div class="rd" style="left:268.5px;top:459.5px"></div><div class="rt" style="left:285px;top:458px"><span style="font-size:9.7px">しない</span></div><div class="rd on" style="left:340.5px;top:459.5px"></div><div class="rt" style="left:357px;top:458px"><span style="font-size:9.7px">する</span></div><div class="sep" style="top:479px"></div>
<div class="lb" style="top:489px">瞳の設定方法</div><div class="rd on" style="left:217.5px;top:490.5px"></div><div class="rt" style="left:234px;top:489px">両目</div><div class="rd" style="left:278.5px;top:490.5px"></div><div class="rt" style="left:295px;top:489px">左目</div><div class="rd" style="left:339.5px;top:490.5px"></div><div class="rt" style="left:356px;top:489px">右目</div><div class="lb" style="top:521px">瞳の種類</div><div class="dd" style="top:513.2px">タイプ4 3<div class="th"><svg width="24" height="23" viewBox="0 0 24 23"><rect width="24" height="23" fill="#c8daf6"/><ellipse cx="12" cy="11.5" rx="6" ry="8" fill="#8a8a8a"/><ellipse cx="12" cy="12" rx="3" ry="4.5" fill="#444"/><ellipse cx="10" cy="8" rx="2" ry="2.5" fill="#bbb"/></svg></div></div>
<div class="lb" style="top:552px">瞳の色①</div><div class="cb" style="top:550.5px;"></div>
<div class="lb" style="top:576px">瞳の色②</div><div class="cb" style="top:574.5px;background:#7fe8c4;border:1.5px solid #fff"></div>
<div class="lb" style="top:606px">瞳のグラデ種類</div><div class="dd" style="top:598.2px">タイプ2<div class="th"><svg width="24" height="23" viewBox="0 0 24 23"><rect width="24" height="23" fill="#f6d8d6"/><ellipse cx="13" cy="13" rx="8" ry="8.5" fill="#5a3a8a"/><ellipse cx="13" cy="14" rx="4" ry="5" fill="#1a1630"/><path d="M2 9 Q10 0 22 5 L23 9 Q12 3 4 11 Z" fill="#3a1a1a"/><ellipse cx="13" cy="18" rx="5" ry="3" fill="#a8a0e8" opacity=".8"/></svg></div></div>
<div class="lb" style="top:637px">瞳のグラデ合成方法</div><div class="sl" style="top:641.5px"><b style="width:12.6px"></b><u style="left:6.1px"></u></div><div class="nb" style="top:636.5px">8</div><div class="rs" style="top:636.5px">Reset</div>
<div class="lb" style="top:661px">瞳のグラデ上下調整</div><div class="sl" style="top:665.5px"><b style="width:47.8px"></b><u style="left:41.3px"></u></div><div class="nb" style="top:660.5px">51</div><div class="rs" style="top:660.5px">Reset</div>
<div class="lb" style="top:685px">瞳のグラデサイズ</div><div class="sl" style="top:689.5px"><b style="width:38.0px"></b><u style="left:31.5px"></u></div><div class="nb" style="top:684.5px">39</div><div class="rs" style="top:684.5px">Reset</div>
<div class="gb" style="left:104px;top:709px;width:141px">左目の設定を右目に反映</div><div class="gb" style="left:253px;top:709px;width:142px">右目の設定を左目に反映</div>
<div class="abs" style="left:2.4px;top:694px;width:41px;height:42px;border-radius:5px;background:#55506a;padding:2px"><div style="width:37px;height:38px;border-radius:3px;background:linear-gradient(180deg,#ffc468 0%,#ffac48 50%,#ff8a22 100%);box-shadow:inset 0 0 0 1.5px #ffe060"></div><svg class="abs" style="left:0;top:0" width="41" height="42" viewBox="0 0 41 42"><path d="M7 8 H32 V29 H16 V34 L5 25.5 L16 17 V22 H27 V12 H7 Z" fill="#fff"/></svg></div>
<div class="rh"><span class="abs" style="left:25px;top:0">確認操作パネル</span><svg class="abs" style="left:101px;top:2px" width="10" height="10" viewBox="0 0 10 10"><path d="M5 1 L9.5 9 H.5 Z" fill="#fff"/></svg></div>
<div class="tl" style="top:36px">服の状態</div><div class="rd on" style="left:1158.5px;top:53.5px"></div><div class="rt" style="left:1175px;top:52px">自動</div><div class="rd" style="left:1217.5px;top:53.5px"></div><div class="rt" style="left:1234px;top:52px">着衣</div><div class="rd" style="left:1158.5px;top:69.5px"></div><div class="rt" style="left:1175px;top:68px">インナー</div><div class="rsep" style="top:89px"></div>
<div class="tl" style="top:97px">眉のパターン</div><div class="selr" style="top:114.0px"><div class="la"></div><div class="bx">デフォルト</div><div class="ra"></div></div>
<div class="tl" style="top:129px">目のパターン</div><div class="selr" style="top:145.5px"><div class="la"></div><div class="bx">デフォルト</div><div class="ra"></div></div>
<div class="tl" style="top:162.5px">目の開き</div><div class="sl2" style="left:1162px;top:181px;width:108px"><b style="width:103.0px"></b><u style="left:98.0px"></u></div>
<div class="abs" style="left:1158px;top:194px;width:13px;height:13px;border-radius:3px;border:1.5px solid #eee;background:#2c2c2c"></div><div class="rt" style="left:1175px;top:193px">瞬きをしない</div><div class="tl" style="top:209px">口のパターン</div><div class="selr" style="top:225.5px"><div class="la"></div><div class="bx">デフォルト</div><div class="ra"></div></div>
<div class="tl" style="top:242.5px">口の開き</div><div class="sl2" style="left:1160px;top:261px;width:108px"><b style="width:5.0px"></b><u style="left:0.0px"></u></div>
<div class="rsep" style="top:278px"></div>
<div class="tl" style="top:286px">視線の向き</div><div class="selr" style="top:303.5px"><div class="la"></div><div class="bx">カメラ</div><div class="ra"></div></div>
<div class="tl" style="top:318.5px">首の向き</div><div class="selr" style="top:335.0px"><div class="la"></div><div class="bx">アニメ</div><div class="ra"></div></div>
<div class="tl" style="top:351px">ポーズ</div><div class="rd on" style="left:1158.5px;top:368.0px"></div><div class="rt" style="left:1175px;top:366.5px">ポーズ</div><div class="rd" style="left:1217.5px;top:368.0px"></div><div class="rt" style="left:1234px;top:366.5px"><span style="font-size:9.4px">ダンス(β)</span></div><div class="selr" style="top:383.5px"><div class="la"></div><div class="bx">基本</div><div class="ra"></div></div>
<div class="rsep" style="top:403px"></div>
<div class="tl" style="top:413.5px">ライトの向き調整</div><div class="rt" style="left:1163.5px;top:427px;font-size:11px;font-weight:normal;-webkit-text-stroke:.3px #fff">X</div><div class="rt" style="left:1163.5px;top:442.5px;font-size:11px;font-weight:normal;-webkit-text-stroke:.3px #fff">Y</div><div class="sl2" style="left:1178px;top:431.5px;width:90px"><b style="width:45.0px"></b><u style="left:40.0px"></u></div>
<div class="sl2" style="left:1178px;top:447.5px;width:90px"><b style="width:45.0px"></b><u style="left:40.0px"></u></div>
<div class="gb" style="left:1162px;top:460px;width:106px;height:14.5px;line-height:14.5px;font-size:9.5px">ライトの向きを初期化</div><div class="rsep" style="top:481px"></div>
<div class="tl" style="top:489.5px">背景の種類</div><div class="rd" style="left:1158.5px;top:506.5px"></div><div class="rt" style="left:1175px;top:505px">画像</div><div class="rd on" style="left:1217.5px;top:506.5px"></div><div class="rt" style="left:1234px;top:505px">単色</div><div class="rt" style="left:1162px;top:523.5px">背景色</div><div class="abs" style="left:1199px;top:524px;width:75px;height:14.5px;border:2px solid #fff;background:#000"></div><div class="rsep" style="top:547px"></div>
<div class="abs" style="left:1151px;top:555.5px;width:127px;height:39px;border-radius:4px;border:2px solid #f08c14;background:#5a3000;color:#fff;font-size:15.9px;line-height:35px;text-align:center;white-space:nowrap;font-weight:500;padding-left:3px">Vルームへ行く</div><div class="rsep" style="top:600.5px"></div>
<div class="abs" style="left:1151px;top:608.5px;width:127.5px;height:39px;border-radius:2px;border:1px solid #c4cce4;background:linear-gradient(180deg,#7484b4,#6878a8);color:#f4f4fa;font-size:11.4px;font-weight:500;line-height:11px;text-align:center;white-space:nowrap;padding-top:8.5px;letter-spacing:0">マニュアルを見る<br><span style="margin:0 -2px">（要ネットワーク環境）</span></div><div class="abs" style="left:738.5px;top:684px;width:340.5px;height:42px;border:1px solid #c8c8c8;background:#14120a;color:#fff;font-size:26.4px;font-weight:500;line-height:42px;padding-left:8px;white-space:nowrap;overflow:hidden">アイギーナ ラティーfix</div>
<div id="dlg" class="abs" style="left:0;top:0;width:0;height:0">
<div class="abs" style="left:421.2px;top:521.5px;width:265.3px;height:16.5px;background:linear-gradient(180deg,#40d0f8 0,#26aae6 2px,#1e98d6 60%,#1a80bc 14px,#0c4a78 16.5px);color:#fff;font-weight:500;font-size:13.6px;line-height:16px;text-align:center;white-space:nowrap;overflow:hidden"><span style="position:relative;left:0;top:-.5px">白目の色②</span>
<div class="abs" style="left:248px;top:2.2px;width:11.5px;height:11.5px;border:1px solid #fff;background:#1e8cc8"><svg class="abs" style="left:0;top:0" width="10" height="10" viewBox="0 0 10 10"><path d="M1.5 1.2 L8.5 8.6 M8.5 1.2 L1.5 8.6" stroke="#fff" stroke-width="1.6"/></svg></div></div>
<div class="abs" style="left:421.5px;top:539px;width:264px;height:188px;border:1px solid #c8c8c8;background:#000;overflow:hidden">
<svg class="abs" style="left:-1px;top:-1px" width="264" height="188" viewBox="421.5 539 264 188">
<defs><filter id="db" x="-50%" y="-50%" width="200%" height="200%"><feGaussianBlur stdDeviation="5"/></filter></defs>
<g filter="url(#db)"><path d="M546,539 L640,539 L626,650 L622,722 L553,722 L562,650 Z" fill="#1c1c2a" stroke="#1c1c2a" stroke-width="14"/><path d="M652,552 L682,552 L682,616 L652,600 Z" fill="#181838" stroke="#181838" stroke-width="12"/></g>
<!-- legs -->
<path d="M557,539 L595,539 L597.5,590 L598,650 L566,650 C564,620 560,580 557,539 Z" fill="#585a6c"/>
<path d="M598,539 L640,539 C640,570 636,600 632,620 L626,650 L599,650 L599,590 Z" fill="#5c5e70"/>
<path d="M596,539 L599,590 L599,650 L597,650 L596.5,590 L594,539 Z" fill="#3a3c54"/>
<path d="M640,539 C640,570 636,600 632,620 L626,650 L623,650 C628,615 636,580 637,539 Z" fill="#44465e"/>
<!-- strap -->
<path d="M536,581 L652,578 L653,588 L538,591 Z" fill="#6c6f84" stroke="#4a4c6a" stroke-width=".6"/>
<path d="M537,584 C541,592 542,600 546,606 L550,604 C546,598 545,592 543,586 Z" fill="#5a5c84"/>
<!-- boots -->
<path d="M566,648 L627,646 L628,656 L624,690 L622,721 L598,722 L596,716 L580,722 L553,722 L553,712 C556,700 562,690 566,680 Z" fill="#5e6072"/>
<path d="M566,648 L627,646 L628,655 L566,657 Z" fill="#6c6e80" stroke="#4a4c66" stroke-width=".5"/>
<path d="M553,712 C556,700 562,690 572,684 C582,682 592,690 596,704 L596,716 L580,722 L553,722 Z" fill="#6a6c7e" stroke="#484a62" stroke-width=".6"/>
<path d="M596,704 C600,694 606,686 614,684 L624,690 L622,721 L598,722 L596,716 Z" fill="#66687a" stroke="#484a62" stroke-width=".6"/>
<path d="M560,706 C566,700 574,698 582,702 M602,700 C606,696 612,694 618,696" stroke="#9a9cb0" stroke-width="1.6" fill="none"/>
<!-- ribbon -->
<path d="M653,556 C658,548 668,547 672,552 C678,552 682,558 681,566 C683,580 682,598 679,614 L673,606 L669,618 L663,602 L658,598 L655,590 Z" fill="#b4b6d6"/>
<path d="M660,560 C668,566 674,580 676,600 M656,572 C662,580 666,590 668,604" stroke="#7a7ca8" stroke-width=".8" fill="none"/>
<path d="M657,553 C660,549 666,549 668,553 L664,560 Z" fill="#8a8cc0"/>
<circle cx="654.6" cy="582.5" r="3.2" fill="#d08a18"/><circle cx="654.6" cy="582.5" r="1.4" fill="#f0c040"/>
</svg></div>
<svg class="abs" style="left:424px;top:542px" width="210" height="16" viewBox="0 0 210 16"><defs><linearGradient id="tabg" x1="0" y1="0" x2="0" y2="1"><stop offset="0" stop-color="#0e6868"/><stop offset="1" stop-color="#064040"/></linearGradient></defs>
<path d="M1 0.5 H50 L67.5 15.5 H1 Z" fill="url(#tabg)"/><path d="M1 0.5 H50 L67.5 15.5" fill="none" stroke="#2a9a9a" stroke-width=".8"/>
<path d="M70 0.5 H119 L136.5 15.5 H70 Z" fill="#4646c4"/><path d="M70 0.5 H119 L136.5 15.5" fill="none" stroke="#7c7ce8" stroke-width=".8"/>
<path d="M139.5 0.5 H188.5 L206 15.5 H139.5 Z" fill="url(#tabg)"/><path d="M139.5 0.5 H188.5 L206 15.5" fill="none" stroke="#2a9a9a" stroke-width=".8"/>
<text x="4.5" y="12.6" font-family="Liberation Sans,Noto Sans CJK JP,sans-serif" font-size="12" font-weight="bold" fill="#fff" letter-spacing="-.5">ピッカー</text>
<text x="73.5" y="12.6" font-family="Liberation Sans,Noto Sans CJK JP,sans-serif" font-size="10.5" font-weight="bold" fill="#fff" letter-spacing="-.8">スライダー</text>
<text x="143" y="12.6" font-family="Liberation Sans,Noto Sans CJK JP,sans-serif" font-size="10.5" font-weight="bold" fill="#fff" letter-spacing="-.8">プリセット</text>
</svg>
<div class="abs" style="left:425.2px;top:557.8px;width:258px;height:165.6px;border:2px solid #4444b8"></div>
<div class="abs" style="left:441px;top:562px;font-size:16.4px;font-weight:bold;line-height:22px;color:#fff;white-space:nowrap">見本</div>
<div class="abs" style="left:505.5px;top:566px;width:171px;height:13px;background:#d3d3d3;border:1px solid #f4f4f4"></div>
<div class="rd on" style="left:435px;top:590.5px;width:10px;height:10px"></div><div class="rt" style="left:449px;top:589px;font-size:12px;font-weight:bold;transform:scaleX(.8);transform-origin:0 50%">HSV</div>
<div class="rd" style="left:483px;top:590.5px;width:10px;height:10px"></div><div class="rt" style="left:497.5px;top:589px;font-size:12px;font-weight:bold;transform:scaleX(.8);transform-origin:0 50%">RGB</div>
<div class="rt" style="left:430px;width:56.5px;text-align:right;top:612.5px">色合い</div>
<div class="abs" style="left:502px;top:613px;width:114px;height:12px;border:1px solid #fff;background:linear-gradient(90deg,#f00 0%,#ff0 16.6%,#0f0 33.3%,#0ff 50%,#00f 66.6%,#f0f 83.3%,#f00 100%)"></div>
<div class="rt" style="left:430px;width:56.5px;text-align:right;top:634px">鮮やかさ</div>
<div class="abs" style="left:502px;top:634.5px;width:114px;height:12px;border:1px solid #fff;background:linear-gradient(90deg,#d3d3d3 0%,#d30000 100%)"></div>
<div class="rt" style="left:430px;width:56.5px;text-align:right;top:655.5px">明るさ</div>
<div class="abs" style="left:502px;top:656px;width:114px;height:12px;border:1px solid #fff;background:linear-gradient(90deg,#000 0%,#fff 100%)"></div>
<svg class="abs" style="left:498px;top:624px" width="110" height="48" viewBox="0 0 110 48"><path d="M5 0.8 L9 5.2 H1 Z" fill="#fff"/><path d="M5 22.3 L9 26.7 H1 Z" fill="#fff"/><path d="M98.5 42.6 L102.5 47 H94.5 Z" fill="#fff"/></svg>
<div class="nb" style="left:631.5px;top:610px;width:31px;height:16.5px;line-height:14px;border-color:#bbb">0</div>
<div class="nb" style="left:631.5px;top:631.3px;width:31px;height:16.5px;line-height:14px;border-color:#bbb">0</div>
<div class="nb" style="left:631.5px;top:652.3px;width:31px;height:16.5px;line-height:14px;border-color:#bbb">83</div>
</div>
</body>
</html>
